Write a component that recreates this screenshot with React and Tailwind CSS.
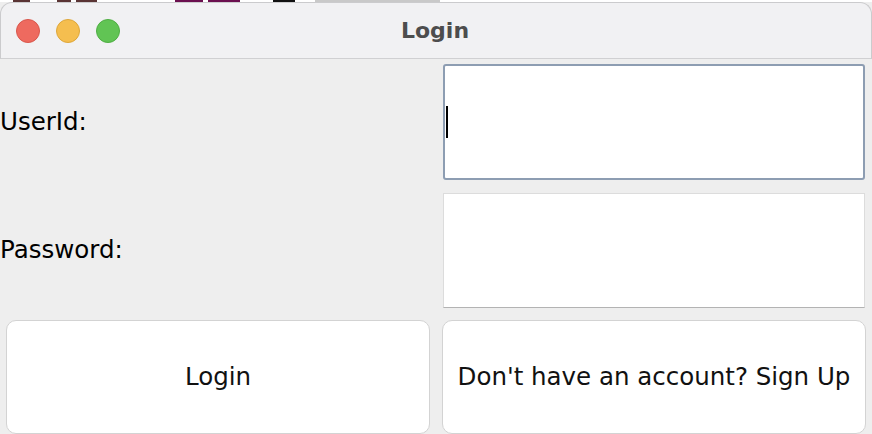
import React from 'react';

// fragments of the window behind, only their lower edges show
const backBits = [
    { x: 13, w: 17, c: 'bg-[#5a3434]' },
    { x: 57, w: 14, c: 'bg-[#5a3434]' },
    { x: 76, w: 21, c: 'bg-[#5a3434]' },
    { x: 175, w: 28, c: 'bg-[#6b0f4f]' },
    { x: 208, w: 32, c: 'bg-[#6b0f4f]' },
    { x: 273, w: 22, c: 'bg-[#111111]' },
    { x: 315, w: 125, c: 'bg-[#c9c9c9]' },
];

export default function App() {
    return (
        <div className="w-[872px] h-[434px] overflow-hidden bg-white flex flex-col" style={{ fontFamily: '"DejaVu Sans", sans-serif' }}>
            {/* Back window peeking out */}
            <div className="h-[2px] shrink-0 flex">
                {backBits.map((b, i) => (
                    <span
                        key={i}
                        className={`h-[2px] ${b.c}`}
                        style={{ marginLeft: i === 0 ? b.x : b.x - backBits[i - 1].x - backBits[i - 1].w, width: b.w }}
                    ></span>
                ))}
            </div>

            {/* Window */}
            <div className="flex-1 flex flex-col overflow-hidden bg-[#eeeeee]">
                {/* Title bar */}
                <div className="h-[57px] shrink-0 bg-[#f1f1f3] rounded-t-[12px] border-t border-x border-b border-[#cbcbcd] border-b-[#d0d0d2] flex items-center relative">
                    <div className="flex items-center gap-[16px] pl-[15px]">
                        <span className="w-[24px] h-[24px] rounded-full bg-[#ee6a5f] border border-[#d9574c]"></span>
                        <span className="w-[24px] h-[24px] rounded-full bg-[#f5be4f] border border-[#dea73a]"></span>
                        <span className="w-[24px] h-[24px] rounded-full bg-[#61c454] border border-[#4fae43]"></span>
                    </div>
                    <div className="absolute inset-0 flex items-center justify-center pointer-events-none">
                        <span className="text-[22px] font-bold text-[#4d4d4d] ml-[-2px]">Login</span>
                    </div>
                </div>

                {/* Form */}
                <div className="flex-1 flex flex-col pt-[5px]">
                    <div className="grid grid-cols-2 items-center">
                        <label className="text-[24.5px] text-black">UserId:</label>
                        <div className="px-[7px]">
                            <div className="h-[116px] bg-white border-2 border-[#8d9db2] rounded-[3px] flex items-center pl-[1px]">
                                <span className="w-[2px] h-[32px] bg-black"></span>
                            </div>
                        </div>
                    </div>

                    <div className="grid grid-cols-2 items-center mt-[13px]">
                        <label className="text-[24.5px] text-black">Password:</label>
                        <div className="px-[7px]">
                            <div className="h-[115px] bg-white border border-[#dcdcdc] border-b-[#b3b3b3]"></div>
                        </div>
                    </div>

                    <div className="grid grid-cols-2 mt-[12px]">
                        <div className="px-[6px]">
                            <button className="w-full h-[114px] bg-white border border-[#d3d3d3] rounded-[10px] text-[24.5px] text-[#111]">
                                Login
                            </button>
                        </div>
                        <div className="px-[6px]">
                            <button className="w-full h-[114px] bg-white border border-[#d3d3d3] rounded-[10px] text-[24.5px] text-[#111] whitespace-nowrap">
                                Don't have an account? Sign Up
                            </button>
                        </div>
                    </div>
                </div>
            </div>
        </div>
    );
}
